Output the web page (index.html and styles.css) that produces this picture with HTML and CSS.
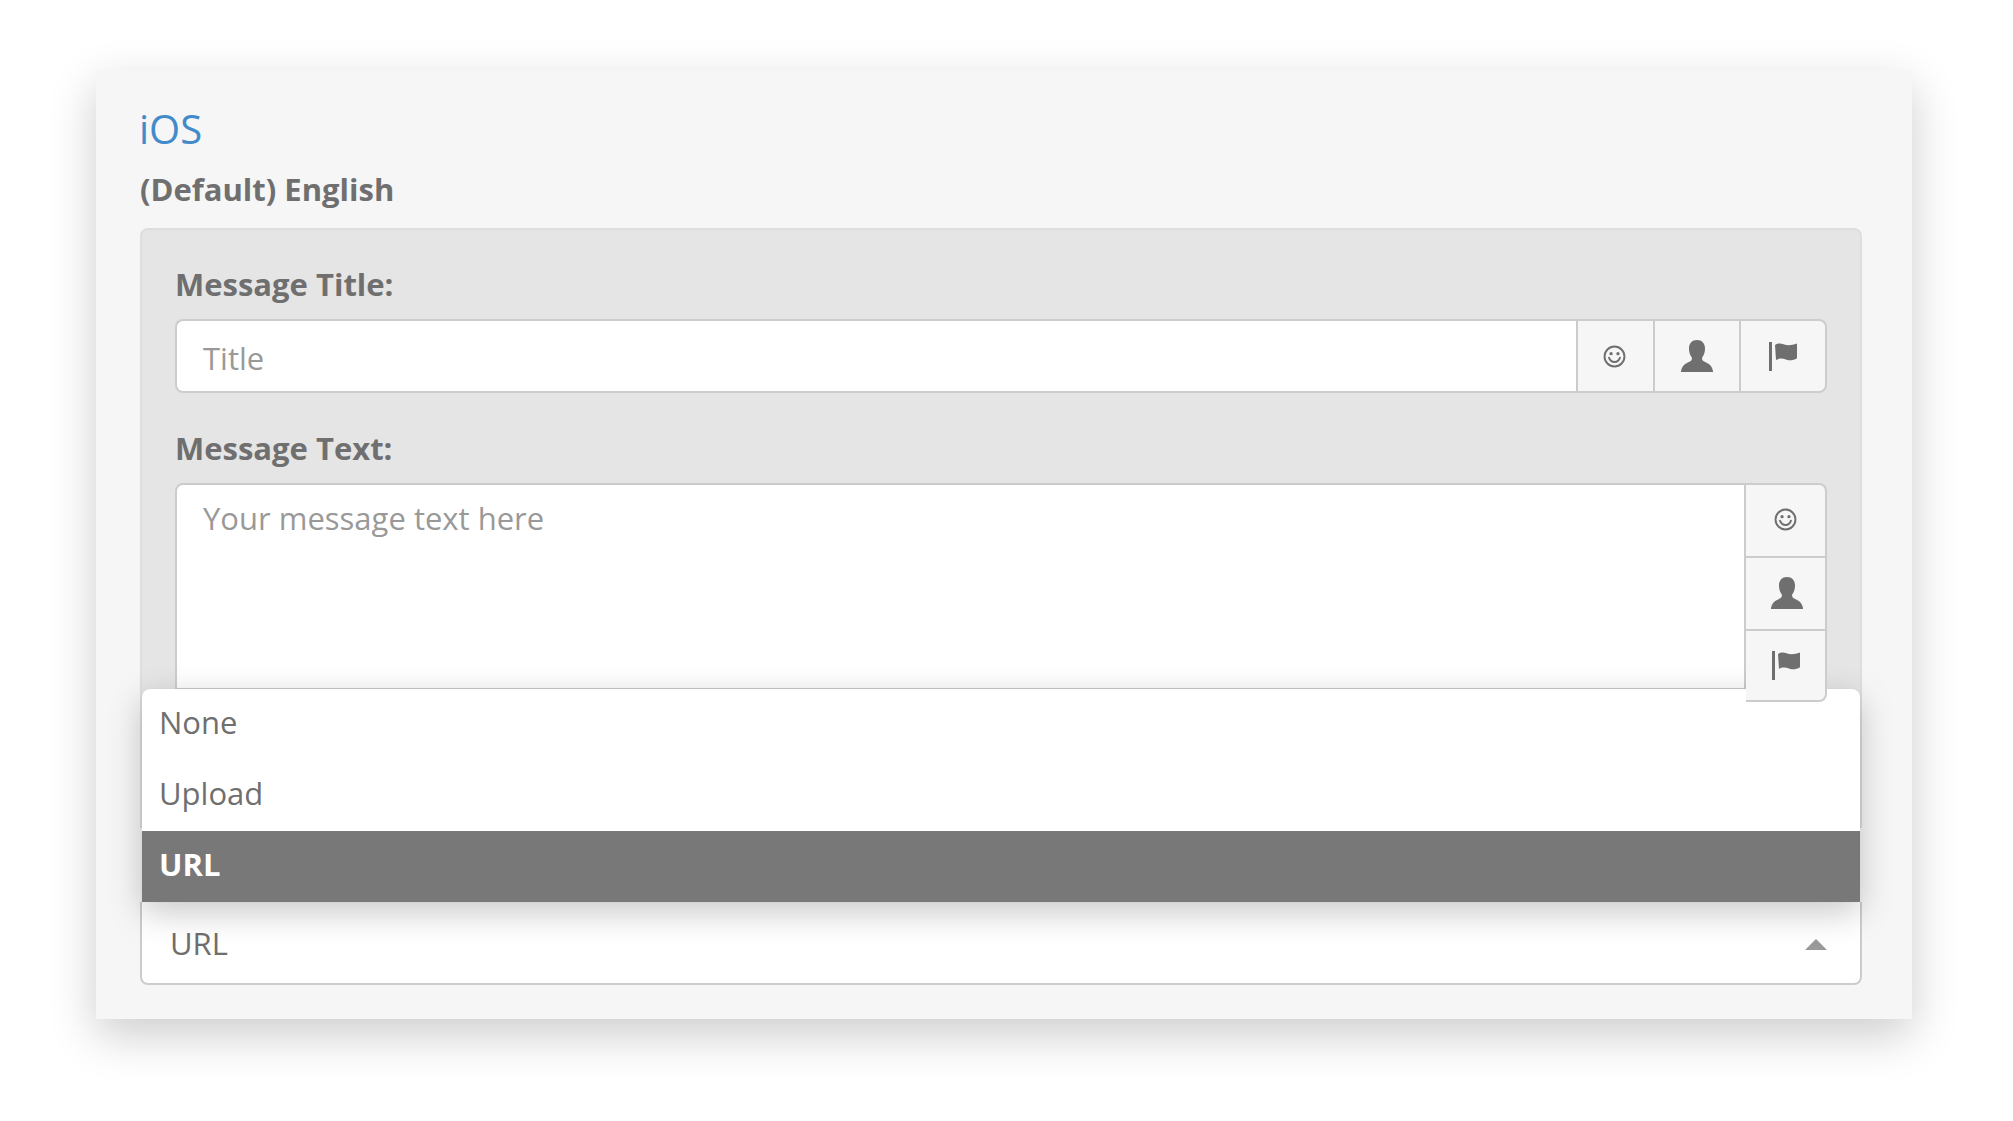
FILE: index.html
```html
<!DOCTYPE html>
<html lang="en">
<head>
<meta charset="utf-8">
<title>iOS message</title>
<link rel="stylesheet" href="styles.css">
</head>
<body>
<svg class="defs" width="0" height="0" aria-hidden="true">
  <symbol id="smile" viewBox="0 0 24 24">
    <circle cx="12" cy="12" r="10.4" fill="none" stroke="currentColor" stroke-width="2"/>
    <circle cx="8.4" cy="9" r="1.7" fill="currentColor"/>
    <circle cx="15.6" cy="9" r="1.7" fill="currentColor"/>
    <path d="M6.3 13.2c1 3 3.2 4.6 5.7 4.6s4.700-1.600 5.700-4.600" fill="none" stroke="currentColor" stroke-width="2" stroke-linecap="round"/>
  </symbol>
  <symbol id="user" viewBox="0 0 32 32">
    <path d="M16 0c-4.800 0-8 3.200-8 8.500 0 3.400.9 6.500 2.500 8.500.7 1 .6 2.600-.3 3.500-1 1-2.500 1.600-4.200 2.500C2.800 24.500.8 27 0 31v1h32v-1c-.8-4-2.800-6.500-6-8-1.700-.9-3.200-1.500-4.200-2.500-.9-.9-1-2.500-.3-3.500C23.100 15 24 11.900 24 8.500 24 3.200 20.800 0 16 0z" fill="currentColor"/>
  </symbol>
  <symbol id="flag" viewBox="0 0 28 29">
    <rect x="0" y="0" width="3" height="29" fill="currentColor"/>
    <path d="M6 3c2.500-1.600 5.500-1.800 8.500-.8 3.500 1.200 7.500 1.500 13.500-.7v14.700c-3.500 2.200-7 2.700-10.500 1.500-3.800-1.300-7.500-1.700-10.500.3L6 3z" fill="currentColor"/>
  </symbol>
</svg>
<main class="panel">
  <h2 class="platform">iOS</h2>
  <h3 class="locale">(Default) English</h3>
  <section class="fields">
    <label class="field-label">Message Title:</label>
    <div class="group">
      <div class="control control-title">Title</div>
      <button class="addon addon-smile" type="button"><svg class="icon-smile"><use href="#smile"/></svg></button>
      <button class="addon addon-user" type="button"><svg class="icon-user"><use href="#user"/></svg></button>
      <button class="addon addon-flag" type="button"><svg class="icon-flag"><use href="#flag"/></svg></button>
    </div>
    <label class="field-label field-label-text">Message Text:</label>
    <div class="group group-text">
      <div class="control control-text">Your message text here</div>
      <div class="addon-stack">
        <button class="stack-btn" type="button"><svg class="icon-smile"><use href="#smile"/></svg></button>
        <button class="stack-btn stack-btn-user" type="button"><svg class="icon-user"><use href="#user"/></svg></button>
        <button class="stack-btn stack-btn-flag" type="button"><svg class="icon-flag"><use href="#flag"/></svg></button>
      </div>
    </div>
  </section>
  <div class="select-wrap">
    <ul class="menu">
      <li class="option">None</li>
      <li class="option">Upload</li>
      <li class="option option-active">URL</li>
    </ul>
    <div class="select">
      <span>URL</span>
      <span class="caret"></span>
    </div>
  </div>
</main>
</body>
</html>
```
FILE: styles.css
```css
* { box-sizing: border-box; }
html, body { margin: 0; background: #fff; }
body {
  height: 1121px;
  overflow: hidden;
  padding: 70px 101px 0 96px;
  font-family: "Open Sans", "Noto Sans", sans-serif;
  color: #6f6f6f;
}
.defs { position: absolute; }
.panel {
  height: 949px;
  padding: 32px 50px 0 44px;
  background: #f6f6f6;
  box-shadow: 0 16px 44px rgba(0, 0, 0, 0.2);
}
.platform {
  margin: 0 0 0 -1px;
  font-size: 40px;
  line-height: 54px;
  font-weight: 400;
  color: #428bca;
}
.locale {
  margin: 13px 0 0;
  font-size: 31px;
  line-height: 40px;
  font-weight: 700;
}
.fields {
  height: 600px;
  margin-top: 19px;
  padding: 34px 33px 0;
  background: #e5e5e5;
  border: 2px solid #dedede;
  border-bottom: 0;
  border-radius: 8px 8px 0 0;
}
.field-label {
  display: block;
  font-size: 31px;
  line-height: 40px;
  font-weight: 700;
  margin-bottom: 15px;
}
.field-label-text { margin-top: 35px; }
.group {
  display: flex;
  height: 74px;
  width: 1652px;
}
.control {
  flex: 1;
  background: #fff;
  border: 2px solid #ccc;
  border-right: 0;
  border-radius: 8px 0 0 8px;
  padding: 0 26px;
  font-size: 31px;
  color: #999;
}
.control-title { line-height: 74px; }
.addon {
  display: flex;
  align-items: center;
  justify-content: center;
  padding: 0;
  height: 74px;
  background: #f6f6f6;
  border: 2px solid #ccc;
  border-right: 0;
  color: #6f6f6f;
}
.addon-smile { width: 77px; padding-right: 3px; }
.addon-user { width: 86px; }
.addon-flag { width: 88px; border-right: 2px solid #ccc; border-radius: 0 8px 8px 0; padding-right: 1px; }
.group-text { height: 207px; align-items: flex-start; }
.control-text {
  height: 207px;
  border-right: 2px solid #ccc;
  border-radius: 8px 0 0 0;
  line-height: 67px;
}
.addon-stack {
  position: relative;
  z-index: 2;
  width: 81px;
  height: 219px;
  display: flex;
  flex-direction: column;
  background: #f6f6f6;
  border: 2px solid #ccc;
  border-left: 0;
  border-radius: 0 8px 8px 0;
}
.stack-btn {
  flex: 1;
  display: flex;
  align-items: center;
  justify-content: center;
  padding: 0 1px 2px 0;
  background: none;
  border: 0;
  border-bottom: 2px solid #ccc;
  color: #6f6f6f;
}
.stack-btn-user { padding: 0 0 2px 2px; }
.stack-btn-flag { padding: 0; border-bottom: 0; }
.icon-smile { width: 23px; height: 23px; }
.icon-user { width: 32px; height: 32px; }
.icon-flag { width: 28px; height: 29px; }
.select-wrap {
  position: relative;
  margin-top: 74px;
}
.menu {
  position: absolute;
  left: 2px;
  right: 2px;
  bottom: 100%;
  z-index: 1;
  margin: 0;
  padding: 0;
  list-style: none;
  background: #fff;
  border-radius: 8px 8px 0 0;
  box-shadow: 0 0 1px rgba(0, 0, 0, 0.12), 0 10px 34px rgba(0, 0, 0, 0.22);
}
.option {
  height: 71px;
  padding: 0 17px;
  font-size: 31px;
  line-height: 66px;
}
.option-active {
  background: #787878;
  color: #fff;
  font-weight: 700;
}
.select {
  display: flex;
  align-items: center;
  justify-content: space-between;
  height: 83px;
  padding: 0 28px;
  background: #fff;
  border: 2px solid #ccc;
  border-top: 0;
  border-radius: 0 0 8px 8px;
  font-size: 31px;
}
.caret {
  width: 0;
  height: 0;
  margin-top: 3px;
  margin-right: 5px;
  border-left: 11px solid transparent;
  border-right: 11px solid transparent;
  border-bottom: 11px solid #999;
}
```
